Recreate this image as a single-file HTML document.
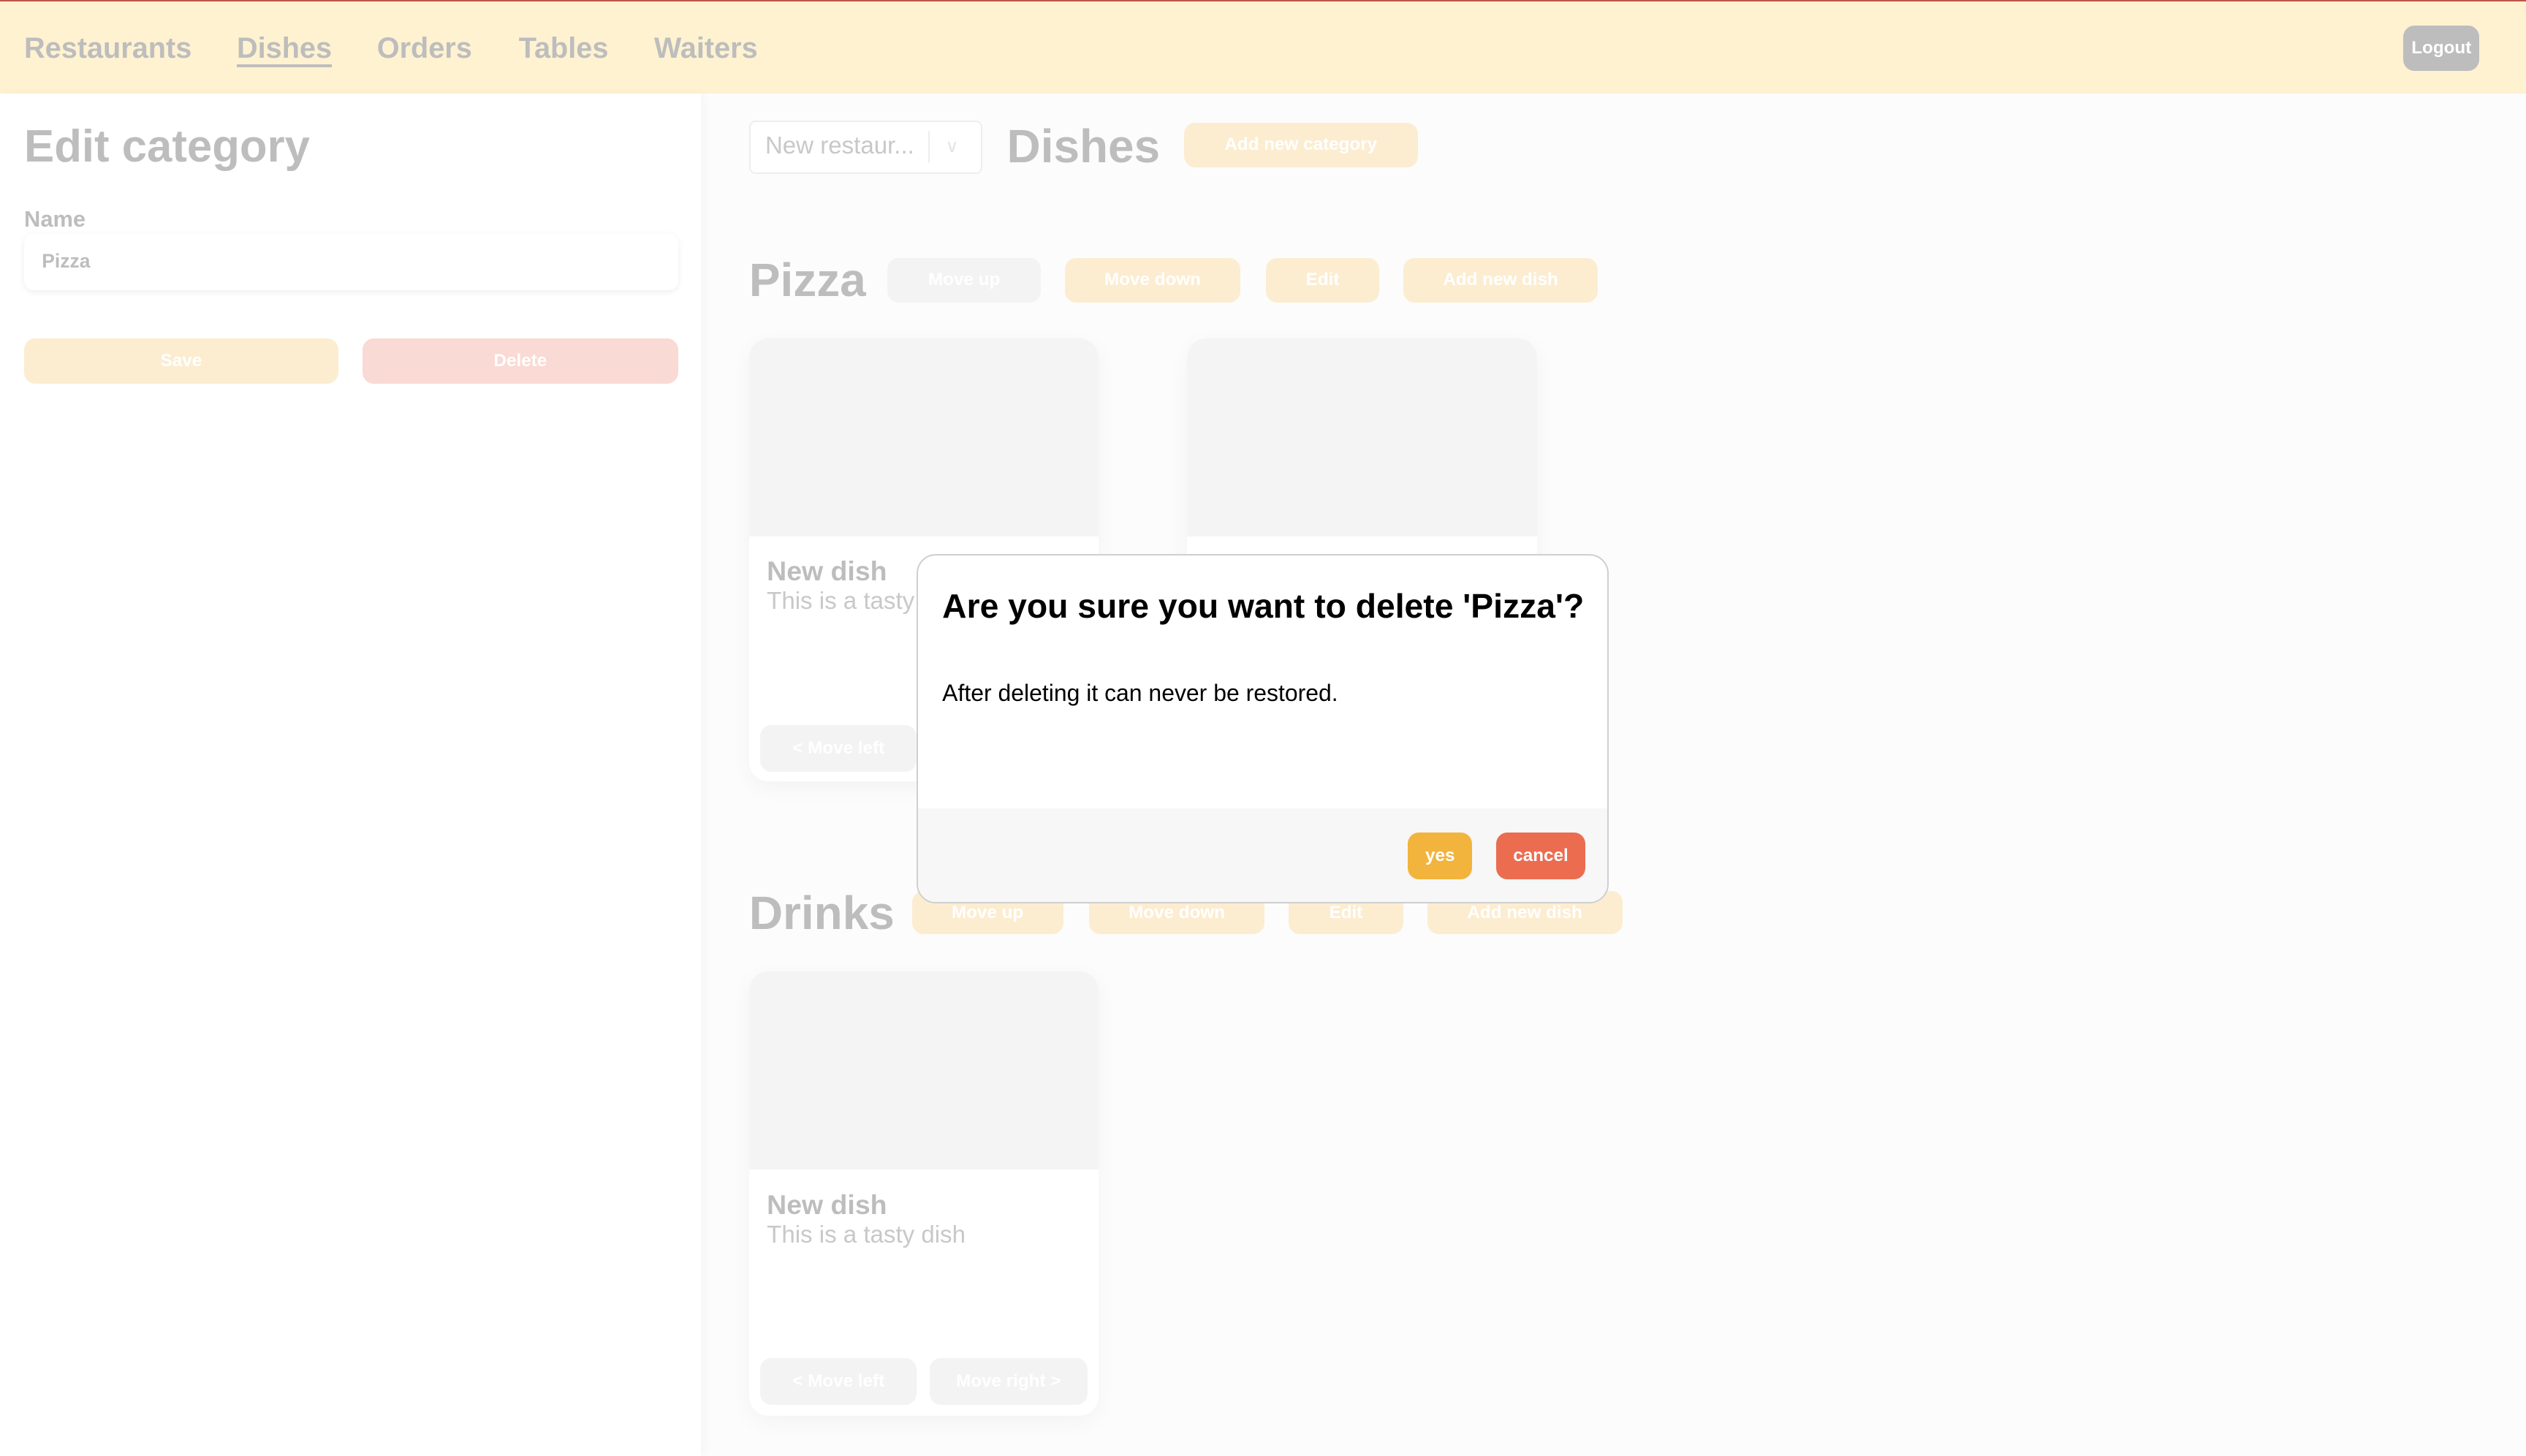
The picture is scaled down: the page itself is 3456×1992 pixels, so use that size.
<!DOCTYPE html>
<html><head><meta charset="utf-8"><style>
html,body{margin:0;padding:0;}
body{width:3456px;height:1992px;overflow:hidden;background:#fdfdfd;font-family:"Liberation Sans",sans-serif;}
#w{zoom:2.20408;width:1568px;height:904px;position:relative;overflow:hidden;background:#fcfcfc;}
.a{position:absolute;}
.nav{position:absolute;top:20px;font-size:18px;font-weight:bold;color:#bdbdbd;}
.btn{position:absolute;border-radius:7px;color:#fff;font-weight:bold;font-size:11px;display:flex;align-items:center;justify-content:center;}
.y{background:#fcedd1;}
.g{background:#f3f3f3;}
.card{position:absolute;width:217px;background:#fff;border-radius:12px;box-shadow:0 4px 14px rgba(0,0,0,0.04);overflow:hidden;}
.img{height:123px;background:#f4f4f4;}
.h{position:absolute;font-size:29px;font-weight:bold;color:#bdbdbd;}
</style></head><body><div id="w">
<div class="a" style="left:0;top:0;width:1568px;height:58px;background:#fff2d1;border-top:1px solid #c0554a;box-sizing:border-box;"></div>
<div class="nav" style="left:15px">Restaurants</div>
<div class="nav" style="left:147px;border-bottom:2px solid #bdbdbd;line-height:20px">Dishes</div>
<div class="nav" style="left:234px">Orders</div>
<div class="nav" style="left:322px">Tables</div>
<div class="nav" style="left:406px">Waiters</div>
<div class="btn" style="left:1492px;top:16px;width:47px;height:28px;background:#bdbdbd">Logout</div>

<div class="a" style="left:0;top:58px;width:435px;height:846px;background:#fff;box-shadow:2px 0 6px rgba(0,0,0,0.03)"></div>
<div class="a" style="left:15px;top:75px;font-size:28px;font-weight:bold;color:#bdbdbd">Edit category</div>
<div class="a" style="left:15px;top:128px;font-size:14px;font-weight:bold;color:#bdbdbd">Name</div>
<div class="a" style="left:15px;top:145px;width:406px;height:35px;background:#fff;border-radius:6px;box-shadow:0 1px 4px rgba(0,0,0,0.07)"></div>
<div class="a" style="left:26px;top:155px;font-size:12px;font-weight:bold;color:#bdbdbd">Pizza</div>
<div class="btn y" style="left:15px;top:210px;width:195px;height:28px">Save</div>
<div class="btn" style="left:225px;top:210px;width:196px;height:28px;background:#fadad4">Delete</div>

<div class="a" style="left:465px;top:75px;width:143px;height:31px;border:1px solid #eee;border-radius:4px;background:#fff"></div>
<div class="a" style="left:475px;top:82px;font-size:15px;color:#c8c8c8">New restaur...</div>
<div class="a" style="left:576px;top:81px;width:1px;height:20px;background:#eee"></div>
<div class="a" style="left:587px;top:84px;font-size:11px;color:#e3e3e3">&#8744;</div>
<div class="h" style="left:625px;top:74px">Dishes</div>
<div class="btn y" style="left:735px;top:76px;width:145px;height:28px">Add new category</div>

<div class="h" style="left:465px;top:157px">Pizza</div>
<div class="btn g" style="left:551px;top:160px;width:95px;height:28px">Move up</div>
<div class="btn y" style="left:661px;top:160px;width:109px;height:28px">Move down</div>
<div class="btn y" style="left:786px;top:160px;width:70px;height:28px">Edit</div>
<div class="btn y" style="left:871px;top:160px;width:121px;height:28px">Add new dish</div>

<div class="card" style="left:465px;top:210px;height:275px"><div class="img"></div></div>
<div class="card" style="left:737px;top:210px;height:275px"><div class="img"></div></div>
<div class="a" style="left:476px;top:345px;font-size:17px;font-weight:bold;color:#bdbdbd">New dish</div>
<div class="a" style="left:476px;top:365px;font-size:15px;color:#c8c8c8">This is a tasty</div>
<div class="btn g" style="left:472px;top:450px;width:97px;height:29px">&lt; Move left</div>

<div class="h" style="left:465px;top:550px">Drinks</div>
<div class="btn y" style="left:566px;top:553px;width:94px;height:27px">Move up</div>
<div class="btn y" style="left:676px;top:553px;width:109px;height:27px">Move down</div>
<div class="btn y" style="left:800px;top:553px;width:71px;height:27px">Edit</div>
<div class="btn y" style="left:886px;top:553px;width:121px;height:27px">Add new dish</div>

<div class="card" style="left:465px;top:603px;height:276px"><div class="img"></div></div>
<div class="a" style="left:476px;top:738px;font-size:17px;font-weight:bold;color:#bdbdbd">New dish</div>
<div class="a" style="left:476px;top:758px;font-size:15px;color:#c8c8c8">This is a tasty dish</div>
<div class="btn g" style="left:472px;top:843px;width:97px;height:29px">&lt; Move left</div>
<div class="btn g" style="left:577px;top:843px;width:98px;height:29px">Move right &gt;</div>

<div class="a" style="left:569px;top:344px;width:428px;height:215px;border:1px solid #cfcfcf;border-radius:12px;background:#fff;overflow:hidden">
  <div class="a" style="left:15px;top:19px;font-size:21px;font-weight:bold;color:#000;white-space:nowrap">Are you sure you want to delete 'Pizza'?</div>
  <div class="a" style="left:15px;top:77px;font-size:14.5px;color:#000">After deleting it can never be restored.</div>
  <div class="a" style="left:0;top:157px;width:428px;height:58px;background:#f7f7f7"></div>
  <div class="btn" style="left:304px;top:172px;width:40px;height:29px;background:#f2b43c;font-size:11px">yes</div>
  <div class="btn" style="left:359px;top:172px;width:55px;height:29px;background:#ec6c50;font-size:11px">cancel</div>
</div>
</div></body></html>
